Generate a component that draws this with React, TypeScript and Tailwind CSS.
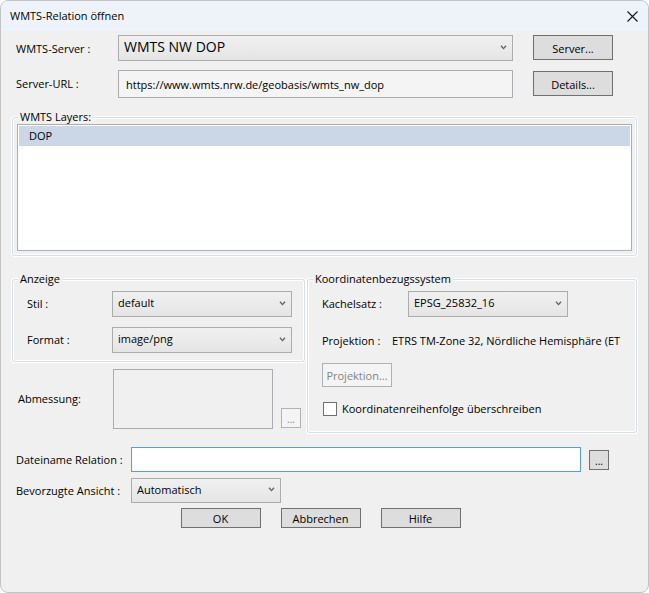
import type { ButtonHTMLAttributes, ReactNode, SelectHTMLAttributes } from "react";

const layers = ["DOP"];

interface GroupProps {
  title: string;
  className?: string;
  children: ReactNode;
}

function Group({ title, className = "", children }: GroupProps) {
  return (
    <fieldset className="min-w-0 flex-1 rounded-[3px] border border-[#d5dfe5] shadow-[0_0_0_1px_#fff,inset_0_0_0_1px_#fff]">
      <legend className="ml-[5px] bg-[#f0f0f0] px-0.5 leading-3.5">{title}</legend>
      <div className={className}>{children}</div>
    </fieldset>
  );
}

interface DropdownProps extends SelectHTMLAttributes<HTMLSelectElement> {
  options: string[];
}

function Dropdown({ options, className = "", ...props }: DropdownProps) {
  return (
    <div className={`grid items-center ${className}`}>
      <select
        className="col-start-1 row-start-1 h-full w-full appearance-none border border-[#acacac] bg-linear-to-b from-[#f0f0f0] to-[#e5e5e5] px-[5px] pb-0.5 outline-none"
        {...props}
      >
        {options.map((option) => (
          <option key={option}>{option}</option>
        ))}
      </select>
      <svg
        className="pointer-events-none col-start-1 row-start-1 mr-1.5 mb-0.5 justify-self-end"
        width="7"
        height="5"
        viewBox="0 0 7 5"
        fill="none"
        stroke="#606060"
        strokeWidth="1.3"
        aria-hidden="true"
      >
        <path d="M1 0.8 3.5 3.6 6 0.8" />
      </svg>
    </div>
  );
}

function Button({ className = "", ...props }: ButtonHTMLAttributes<HTMLButtonElement>) {
  return (
    <button
      type="button"
      className={`shrink-0 border border-[#707070] bg-[#dddddd] pt-0.5 text-center leading-4 disabled:border-[#adb2b5] disabled:bg-[#f4f4f4] disabled:text-[#838383] ${className}`}
      {...props}
    />
  );
}

export default function App() {
  return (
    <div className="flex min-h-screen flex-col overflow-hidden rounded-lg border border-[#c3c3c3] bg-[#f0f0f0] font-['Open_Sans','Noto_Sans',sans-serif] text-[11px] leading-4 text-black">
      <header className="flex h-[30px] shrink-0 items-center justify-between bg-[#eef3fb] pr-2.5 pl-[9px]">
        <h1>WMTS-Relation öffnen</h1>
        <button type="button" aria-label="Schließen">
          <svg width="11" height="11" viewBox="0 0 11 11" fill="none" stroke="#1a1a1a" strokeWidth="1.2">
            <path d="M0.5 0.5 10.5 10.5M10.5 0.5 0.5 10.5" />
          </svg>
        </button>
      </header>

      <form className="flex flex-col pt-1">
        <div className="flex items-start pr-[35px] pl-[15px]">
          <label htmlFor="server" className="w-[102px] shrink-0 pt-1.5">
            WMTS-Server :
          </label>
          <Dropdown id="server" options={["WMTS NW DOP"]} className="h-[26px] flex-1 text-[14px]" />
          <Button className="ml-5 h-[25px] w-20">Server...</Button>
        </div>
        <div className="mt-[9px] flex items-start pr-[35px] pl-[15px]">
          <label htmlFor="url" className="w-[102px] shrink-0 pt-1.5">
            Server-URL :
          </label>
          <input
            id="url"
            readOnly
            value="https://www.wmts.nrw.de/geobasis/wmts_nw_dop"
            className="h-7 min-w-0 flex-1 border border-[#abadb3] bg-[#f4f4f4] px-[7px] outline-none"
          />
          <Button className="mt-px ml-5 h-[25px] w-20">Details...</Button>
        </div>

        <div className="mx-[11px] mt-3 flex">
          <Group title="WMTS Layers:" className="px-1 pb-1">
            <ul role="listbox" aria-label="WMTS Layers" className="h-[127px] overflow-y-auto border border-[#abadb3] bg-white p-px">
              {layers.map((layer) => (
                <li key={layer} role="option" aria-selected="true" className="bg-[#cbd6e6] px-2.5 py-0.5">
                  {layer}
                </li>
              ))}
            </ul>
          </Group>
        </div>

        <div className="mx-[11px] mt-4 flex items-start gap-0.5">
          <div className="w-[293px] shrink-0">
            <Group title="Anzeige" className="pr-3 pb-2 pl-3.5">
              <div className="flex items-center pt-[5px]">
                <label htmlFor="style" className="flex-1">
                  Stil :
                </label>
                <Dropdown id="style" options={["default"]} className="h-[26px] w-[180px]" />
              </div>
              <div className="mt-2.5 flex items-center">
                <label htmlFor="format" className="flex-1">
                  Format :
                </label>
                <Dropdown id="format" options={["image/png"]} className="h-[26px] w-[180px]" />
              </div>
            </Group>
            <div className="mt-[7px] flex items-end pr-1 pl-1.5">
              <label htmlFor="size" className="flex-1 self-center">
                Abmessung:
              </label>
              <textarea
                id="size"
                readOnly
                className="h-[60px] w-40 resize-none border border-[#abadb3] bg-[#f0f0f0] outline-none"
              />
              <Button disabled className="mb-px ml-2 h-5 w-5 text-[10px]" aria-label="Abmessung wählen">
                ...
              </Button>
            </div>
          </div>

          <Group title="Koordinatenbezugssystem" className="pb-[15px] pl-3.5">
            <div className="flex items-center pt-[5px]">
              <label htmlFor="tiles" className="w-[86px]">
                Kachelsatz :
              </label>
              <Dropdown id="tiles" options={["EPSG_25832_16"]} className="h-[26px] w-40" />
            </div>
            <div className="mt-4 flex overflow-hidden whitespace-nowrap">
              <span className="w-[70px] shrink-0">Projektion :</span>
              <span>ETRS TM-Zone 32, Nördliche Hemisphäre (ET</span>
            </div>
            <Button disabled className="mt-3.5 block h-6 w-[70px]">
              Projektion...
            </Button>
            <label className="mt-3.5 flex items-center gap-[5px] pl-px">
              <input
                type="checkbox"
                className="size-3.5 appearance-none border border-[#707070] bg-white checked:bg-[#707070]"
              />
              Koordinatenreihenfolge überschreiben
            </label>
          </Group>
        </div>

        <div className="mt-3.5 flex items-center pr-[39px] pl-[15px]">
          <label htmlFor="file" className="w-[115px] shrink-0 whitespace-nowrap">
            Dateiname Relation :
          </label>
          <input id="file" className="h-[25px] min-w-0 flex-1 border border-[#569de5] bg-white px-1 outline-none" />
          <Button className="ml-2 h-5 w-5 text-[10px]" aria-label="Datei wählen">
            ...
          </Button>
        </div>
        <div className="mt-1.5 flex items-center pl-[15px]">
          <label htmlFor="view" className="w-[115px] shrink-0 whitespace-nowrap">
            Bevorzugte Ansicht :
          </label>
          <Dropdown id="view" options={["Automatisch"]} className="h-[25px] w-[150px]" />
        </div>

        <div className="mt-[5px] mr-2 flex justify-center gap-5">
          <Button className="h-5 w-20">OK</Button>
          <Button className="h-5 w-20">Abbrechen</Button>
          <Button className="h-5 w-20">Hilfe</Button>
        </div>
      </form>
    </div>
  );
}
